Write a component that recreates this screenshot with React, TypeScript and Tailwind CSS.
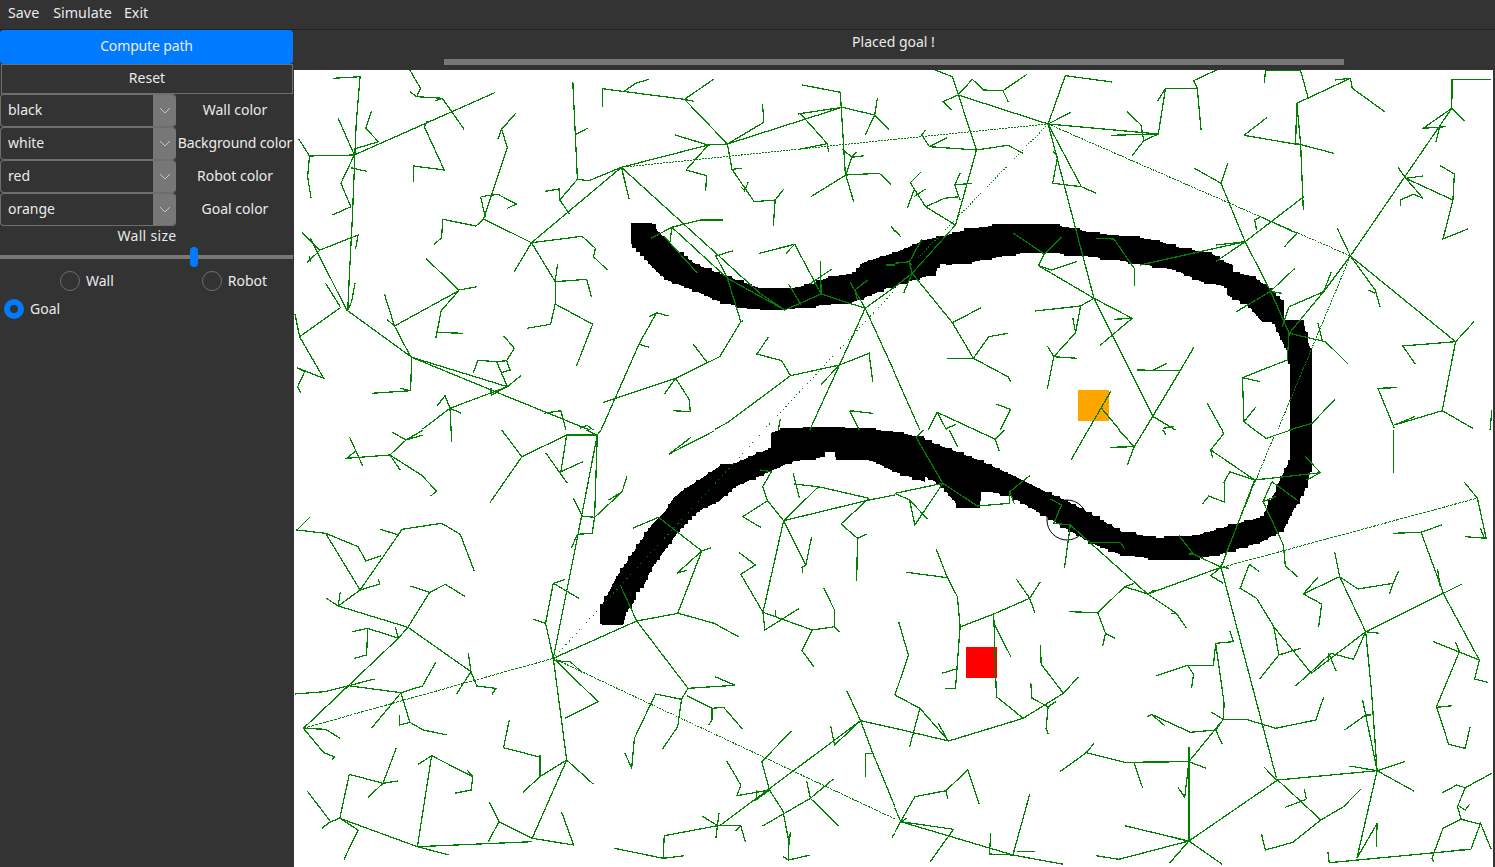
import React from "react";

type Q = { ox: number; oy: number; sx?: number };
const Q1: Q = { ox: 295, oy: 0 };
const Q2: Q = { ox: 895, oy: 0 };
const Q3: Q = { ox: 295, oy: 430 };
const Q4: Q = { ox: 895, oy: 430 };
const Z1: Q = { ox: 600, oy: 215, sx: 3 };
const Z2: Q = { ox: 595, oy: 420, sx: 3 };
const Z3: Q = { ox: 925, oy: 220, sx: 3 };
const Z4: Q = { ox: 925, oy: 320, sx: 3 };
const SX = 1568 / 600;

const conv = (q: Q, s: string): [number, number][] =>
  s.trim().split(/\s+/).map((p) => {
    const [a, b] = p.split(",").map(Number);
    return [q.ox + a / (q.sx ?? SX), q.oy + b / 3];
  });
const toPts = (q: Q, s: string) => conv(q, s).map(([x, y]) => `${x.toFixed(1)},${y.toFixed(1)}`).join(" ");

const L1 = `100,235 170,230 160,370 150,650 142,830 138,930
300,210 328,265 318,290 385,295 442,388
300,275 318,290
367,303 385,295
522,278 155,465 38,468 33,530 42,595
10,417 38,468
113,355 155,465
200,332 185,385 218,425 155,447
338,380 390,510 310,498 310,545
338,380 346,362
155,465 120,550 146,620 98,645
145,503 187,514
726,245 738,538 768,542 853,502
735,403 767,383
738,538 692,600 718,643
654,574 690,567 692,600
853,502 618,728
853,502 873,596
853,502 1080,435 1130,432
853,502 1215,880 1280,930
803,322 803,266 1018,298 1130,432
860,274 890,250 925,238
1018,298 1094,238
1018,298 1042,304
1130,432 1430,322 1515,345 1552,388
1130,432 1225,367 1222,313
993,405 1080,435 1022,510 1076,527 1073,572
1130,432 1142,508 1200,605 1255,600 1277,568
1255,600 1250,677
1142,508 1167,505
1165,560 1175,572 1185,545
1326,255 1425,277 1438,520 1460,605
1314,342 1430,322
1320,340 1390,430 1395,455
1522,295 1515,345 1490,405
1320,447 1388,432
1430,447 1455,472 1440,525 1348,590
1467,455 1455,472 1488,467
1440,525 1527,520 1558,553
578,338 540,388 530,418
540,388 555,443 493,657 618,728
493,657 473,678 386,658 383,713 364,733
485,590 530,583 578,612 555,625
485,590 497,650
618,728 750,709 785,745 780,770 817,811
618,728 572,817
618,728 680,845 762,838 775,892
686,793 680,845 680,912 668,973 606,985
680,912 778,973 736,1097
18,697 65,750 32,788
40,715 135,930
38,768 40,785
65,750 165,705 158,748
80,850 118,920
157,848 148,905 138,930
120,922 12,1010 75,1135 5,1103 25,1115 7,1160 15,1178
0,942 12,1010
135,930 305,1072
342,775 428,870 476,860
428,872 260,978 240,958
428,872 382,932 368,1015
368,997 438,1000
234,883 260,978 303,1072
305,1072 302,1172 200,1180
275,1165 302,1172
305,1072 555,1160 590,1127
305,1072 530,1178 770,1290
555,1160 405,1225 333,1288
555,1160 527,1085 478,1081 466,1118
527,1085 553,1082 573,1045 545,1007
553,1082 562,1110 538,1118
512,1165 513,1185 555,1160
392,1187 405,1225 435,1240
372,1217 392,1187
405,1225 408,1290
650,1240 695,1232 708,1290
745,1285 763,1276 780,1290
800,1290 900,1030 945,938 976,948
925,950 945,938
900,1033 925,1042
806,1207 995,1135 1110,1070 1165,965 1130,835
1165,965 1172,962
995,1135 965,1183
995,1135 1030,1198 1033,1235 988,1232
1041,1033 1077,1087
1097,1288 1130,1268 1295,1127 1423,1095 1500,1060 1510,1145
1295,1127 1272,1082 1207,1062 1237,1012
1423,1095 1375,1153
1423,1095 1345,1290
1490,925 1423,1095
1130,835 1280,930 1375,882 1490,925 1568,1120
1130,835 1100,768 1145,752
930,715 985,682 1060,660 1118,660
985,682 980,725
985,682 1130,835
965,710 1052,820
1213,760 1306,733 1375,882
1283,760 1306,733
1373,782 1375,882
1345,852 1402,808
1290,853 1322,913
1450,845 1490,925
1463,870 1497,840
1463,870 1470,900
1490,925 1568,860
1558,678 1568,695
1268,1258 1263,1290
1450,1232 1510,1240
1450,1232 1475,1290
1545,795 1568,795`;

const L2 = `105,210 150,230 213,450 158,675 45,820
165,285 202,238 232,270 282,272 345,223
282,272 297,307
148,330 125,305 165,285
165,285 400,372 688,402 707,265 790,265 800,390
790,265 780,242 840,210
686,304 707,265
400,372 445,227 568,246
400,372 460,337
400,372 487,560 412,550 425,470 412,452
487,560 526,580
400,372 520,895 675,1250
565,406 688,402 650,422 620,467
607,335 643,375 650,422
213,450 295,436 335,460
213,450 90,440 70,405 80,390
90,440 135,413
158,675 80,620 40,548 67,517
80,620 130,595 168,590
32,625 50,570
50,590 80,567
170,520 156,555 170,600
156,555 200,550
1050,310 1190,235 1195,265 1280,335
1150,240 1190,235
1050,310 1047,430 1147,460
1050,310 1060,430 1067,630
912,406 973,352
912,406 1060,435
965,250 968,212 1060,212 1080,295
1557,238 1456,238 1455,325 1380,385 1440,380
1455,325 1488,362
1455,325 1190,768
1425,375 1413,427
780,503 852,550 870,490
852,550 915,725 980,870 1030,1000
840,735 915,725 640,795
915,725 838,785
915,725 1068,590
955,650 1050,700 1018,740
945,690 940,660 955,650
1315,503 1335,535 1380,595 1355,583 1320,600 1322,617
1335,535 1380,528
1335,535 1458,600 1462,522 1425,497
1458,600 1432,717 1498,686
1156,685 1190,768 1255,870 1268,922
1238,870 1255,880
1190,768 1465,1025 1513,965
1465,1025 1327,1038 1360,1093
1465,1025 1430,1232 1305,1275 1358,1250
1430,1232 1510,1285
1312,1163 1262,1165 1305,1285
1190,768 1120,875 1030,920 1012,980
1120,875 1140,817
1120,875 1030,1000
1030,1000 1125,1025 1185,1093
1105,968 1117,1022
1030,1000 1025,1080 908,1133 912,1265 940,1290
908,1133 955,1145
912,1265 942,1222
1150,1198 1090,1270 1030,1290
892,935 980,875 1045,805
985,875 1012,880
0,690 15,710
0,790 38,785
70,718 38,785 45,820 23,878
45,820 0,860
45,820 150,968 205,1075 295,1130 302,1145
150,968 225,923
136,1075 205,1075 245,1010 295,1000
310,700 390,762 435,712
390,762 375,797 410,810 475,785
375,797 520,895 620,955 535,1037
572,958 620,955
520,895 485,918 367,933
485,918 472,998 415,1070 398,1166
465,955 472,998
398,1037 415,1070 477,1075
525,715 572,717 625,805 627,858
0,1122 65,1290
505,1290 565,1172
540,1225 587,1290
632,1110 745,1112 782,1040
745,1112 652,1290
675,1110 710,1090
675,1250 733,1290
700,1285 730,1280
265,1213 302,1228 275,1290
87,1290 110,1237 210,1290
110,1237 135,1290
135,1285 160,1273
815,1208 855,1290
1560,1230 1555,1290`;

const L3 = `143,22 177,108
252,5 290,30 335,15
290,30 248,75 135,85 160,62
335,0 290,30
248,75 275,120
248,75 330,135 370,183 355,198
408,0 410,37
540,0 593,80 710,15 790,15
593,80 510,217
655,68 712,160
710,15 695,125 752,95
790,15 783,262 750,258 727,203
783,262 855,185 868,137
820,210 855,185
783,262 777,310 738,313 722,355
790,15 740,310 675,685
760,0 790,15 800,0
978,72 1095,3
978,72 1035,22
675,685 893,573 1002,550 1095,580 1162,622
852,470 893,573 1027,775 1150,766 1098,740
1027,775 1010,808 942,792 887,925 880,1013 862,970
1010,808 1000,890 960,958
1023,797 1090,835 1120,832 1170,898
1090,835 1090,870 1080,886
882,295 950,262 1063,363 1000,550
1063,363 1087,353
1063,363 998,430 1025,420
1215,120 1245,125 1222,170 1235,212 1277,272
1235,212 1170,260 1217,292
1277,272 1368,170 1500,205
1302,130 1318,203
1305,162 1368,170
1277,272 1500,210 1568,195
1500,205 1427,282 1470,325 1495,312
1470,325 1468,452
1277,272 1335,405 1350,322
1335,405 1325,412 1327,430
1277,272 1223,547 1228,600 1318,535
1160,367 1203,405 1165,433 1223,547 1352,600 1325,662 1357,712
1352,600 1410,590 1423,605
1410,590 1410,540 1382,475
1255,540 1257,560
40,260 5,300 80,310 165,350 185,393 225,377
80,310 170,480 222,462 218,447
170,480 280,298 383,280 432,313 468,422
222,298 272,315
170,480 113,528 82,505
118,487 113,528
113,528 295,592 460,725
302,468 352,487 393,463 445,500
352,487 295,592 270,625 22,895
150,605 190,595 270,625
190,595 187,675 155,685
262,592 270,622
453,670 460,725 422,792
460,725 475,768 525,775 515,793
368,697 333,768 277,788 140,767 22,895
208,747 140,767 78,785 0,792
277,788 200,895
277,788 300,877 273,885 273,855
300,877 335,900 398,915
22,895 80,898 118,925
22,895 75,968 103,980 97,988
675,685 655,580 675,460 742,505
623,568 655,580
675,460 706,448
675,685 710,990 780,1063
675,685 792,815 705,865
675,692 720,695 750,728
710,990 640,1040 595,1088
640,1040 640,975
642,982 545,953 560,870
710,990 620,1225 728,1245 697,1147
620,1225 533,1175 508,1117
533,1175 505,1235
620,1235 320,1250 403,1275
320,1250 357,977 322,1003
357,977 465,1040 450,1020
465,1040 460,1080 417,1090
320,1250 117,1165 142,1033 230,1060 268,1053
230,1060 265,953
230,1060 190,1103
32,1083 93,1175 70,1195
117,1165 93,1175
117,1165 165,1200 128,1288
1442,782 1478,872 1110,1187
1478,872 1568,895
1478,872 1510,970 1568,1130
1510,970 1490,970 1490,1040
1400,887 1410,945 1478,872
1298,902 1220,995 1240,1080 1275,1143 1290,1230 1290,1290 1275,1280
1128,992 1165,1065 1155,1097 1240,1080
1207,1080 1205,1110 1240,1080
1222,1188 1347,1105 1420,1188
1337,1053 1347,1105 1407,1047
1062,1157 1105,1187 965,1217 962,1285 835,1255
962,1285 1018,1277
1105,1187 1165,1187 1177,1237
1165,1187 1152,1203
1108,1150 1100,1225
1290,1290 1347,1275
1295,1205 1290,1250
1568,1210 1560,1222`;

const L4 = `55,22 125,160 215,228 300,220 300,185 352,137
75,0 55,22
125,160 52,285 38,210 0,190
125,160 0,190
38,210 85,267
300,185 312,222
407,207 435,225 415,280 458,285 443,415
458,285 660,492
510,338 590,338 600,357
142,0 163,50
210,0 262,28 272,62
262,28 287,0
505,0 460,90
585,0 625,50 607,105
562,52 625,50 652,0
700,0 708,15
855,0 858,12 825,60 830,85
825,60 940,150 1112,128 1072,80
1112,128 1075,150
940,150 875,125 860,157 862,217 820,198 803,223
940,150 852,412
940,0 970,25 1035,0
985,155 1053,212
985,155 962,215 1015,345 1020,408 1052,440
962,215 995,200
742,317 780,372 852,412
768,372 780,372
852,412 660,492 600,470 530,548 550,610 543,647
550,610 575,625
456,545 530,548
600,470 625,460
660,492 735,550 762,595
722,550 735,550
660,492 678,480
852,412 825,437 858,460
852,412 873,415
852,412 997,1045
952,425 926,403 902,475 945,505 990,590 1003,675 952,748
990,590 1088,730
1003,675 1060,655
1149,365 1162,440 1230,605 1482,462
1162,440 1067,492 1105,442
1067,492 1115,522 1107,592
1162,440 1210,477 1302,460 1316,423
1302,460 1292,493
1302,0 1302,130
1488,157 1522,205 1545,325 1490,320
1530,295 1540,325
1302,310 1375,307 1430,284
1375,307 1435,495 1527,690 1515,747 1550,757
1418,418 1425,470
1407,635 1527,690
1465,637 1475,665 1415,830 1447,943 1490,955 1503,890
1415,832 1457,827
1230,605 1265,610
1230,605 1198,688 1140,670 1047,768
1230,605 1088,730
1133,670 1133,695
1133,670 1153,723
1230,605 1245,780 1260,1022 1207,1285
1222,810 1258,1010
1230,855 1175,900
1230,855 1243,855
1260,1022 1000,1050 768,1233 600,1187
1260,1022 1188,1008
1260,1022 1332,995
1260,1022 1357,1084
997,1050 965,1012
1000,1050 1113,1170 1172,1130 1217,1078
1113,1170 1040,1237 968,1260 958,1213
1075,1108 1020,1132
1070,1078 1075,1108
1131,1265 1135,1298 1505,1258 1530,1180 1558,1258
1207,1285 1260,1180 1258,1250
1560,1030 1490,1073 1470,1130 1480,1168 1530,1183
1490,1073 1468,1065 1428,1090
1470,1125 1490,1140 1502,1122
1480,1168 1432,1195 1403,1285 1408,1295
1455,1262 1505,1258
875,603 884,635 838,640 832,706 765,706 683,737
838,640 860,820 858,868 768,995 768,1233
765,706 780,733 775,773
827,847 858,868 917,868 995,895 1100,870 1120,802
858,868 838,900 772,907 670,853 705,887
660,860 670,853
838,900 855,943
431,1025 500,968 520,940
500,968 600,997 768,995 813,1015
625,1000 647,1073
768,950 768,995 757,1102 740,1073
768,1233 855,1303
768,1233 585,1288 525,1277
733,1225 768,1233 717,1300
108,358 137,443 163,500 170,590 158,775 130,775
30,427 137,443
172,590 258,552 352,505 380,455
352,505 317,447
352,505 365,548
258,552 265,800 335,865 140,933 0,895
258,552 258,580 303,680
122,730 160,717
380,645 382,703 440,790 335,865
440,790 480,740
355,760 358,805 400,830 395,895 400,912
400,830 420,815
10,577 35,675 0,795 65,835 140,933
65,835 38,952
113,880 135,925
0,1135 15,1175 52,1100 133,1082 190,1020 220,1122
133,1082 138,1108
15,1175 153,1198 92,1295
15,1175 308,1275 440,1303
0,1205 15,1175 32,1165
250,1210 247,1272 308,1275 352,1093
320,1265 365,1265`;

const DOTS: [Q, string, string][] = [
  [Q1, "853,502 1568,418", "2 1"],
  [Q2, "0,418 400,372", "2 1"],
  [Q2, "400,372 1190,768", "2 1"],
  [Q2, "400,372 38,800", "1 2"],
  [Q2, "1190,768 1000,1290", "2 1"],
  [Q1, "1232,1282 1568,870", "1 3"],
  [Q3, "1215,15 675,685", "1 4"],
  [Q3, "22,895 675,685", "3 1"],
  [Q3, "675,685 1568,1167", "2 1"],
  [Q4, "990,20 850,410", "2 1"],
  [Q4, "855,412 1520,205", "3 1"],
];

const wall: [number, number][] = [
  ...conv(Z1, "93,23 155,23 175,50 215,90 255,125 290,150 345,170 410,195 480,220 560,222 630,210 690,185 765,175 785,145 830,130 880,115 930,95"),
  ...conv(Z3, "0,60 80,42 140,25 230,15 380,15 450,25 500,40 600,48 690,60 770,85 860,100 895,125 925,135 925,160 970,165 1000,180 1030,205 1075,245 1075,300 1135,300"),
  ...conv(Z4, "1145,50 1160,100 1160,340 1155,460 1140,510 1100,580 1075,630 1010,665 880,705 820,715 680,715 590,705 500,670 380,600 330,570 250,525 170,512 165,558 100,558 60,510 40,490 0,470"),
  ...conv(Z2, "990,185 900,155 830,122 722,115 718,93 690,93 690,110 590,125 490,170 420,200 370,245 325,265 290,290 250,335 210,390 170,445 150,490 125,515 115,550 95,575 85,615 20,615 20,555 45,510 65,470 100,420 130,375 170,315 210,275 235,235 265,210 320,175 380,135 420,130 490,100 528,85 528,40 565,25 640,22 720,20 780,25 900,35 990,55"),
  ...conv(Z4, "0,360 80,390 160,420 260,465 350,510 420,540 520,595 590,635 700,655 820,645 940,610 1015,590 1030,550 1055,510 1060,490 1085,440 1095,420 1095,130 1085,90 1065,50"),
  ...conv(Z3, "1045,305 1010,305 970,255 905,225 905,200 830,185 750,150 640,130 540,115 400,100 290,100 200,115 120,130 65,135 45,125 30,165 0,170"),
  ...conv(Z1, "860,220 790,250 745,265 670,270 550,285 450,283 360,260 280,225 200,195 160,160 130,120 93,85"),
];

function stairs(pts: [number, number][], g: number) {
  const snap = (v: number) => Math.round(v / g) * g;
  let d = "";
  let last: [number, number] | null = null;
  for (let i = 0; i < pts.length; i++) {
    const [ax, ay] = pts[i];
    const [bx, by] = pts[(i + 1) % pts.length];
    const n = Math.max(1, Math.ceil(Math.hypot(bx - ax, by - ay)));
    for (let k = 0; k < n; k++) {
      const x = snap(ax + ((bx - ax) * k) / n);
      const y = snap(ay + ((by - ay) * k) / n);
      if (!last) {
        d += `M${x} ${y}`;
        last = [x, y];
      } else if (x !== last[0] || y !== last[1]) {
        if (x !== last[0]) d += `H${x}`;
        if (y !== last[1]) d += `V${y}`;
        last = [x, y];
      }
    }
  }
  return d + "Z";
}

const wallPath = stairs(wall, 4);
const wallOutline = wall.map(([x, y]) => `${x.toFixed(1)},${y.toFixed(1)}`).join(" ");

function Lines({ q, data }: { q: Q; data: string }) {
  return (
    <>
      {data.split("\n").map((l, i) => (
        <polyline key={i} points={toPts(q, l)} fill="none" stroke="#008000" strokeWidth={1.25} shapeRendering="crispEdges" />
      ))}
    </>
  );
}

function Chevron() {
  return (
    <svg width="12" height="7" viewBox="0 0 12 7" fill="none" stroke="#c4c4c4" strokeWidth="1">
      <path d="M1 1 L6 6 L11 1" />
    </svg>
  );
}

function ColorRow({ value, label, labelClass = "" }: { value: string; label: string; labelClass?: string }) {
  return (
    <div className="flex h-[33px] items-center">
      <div className="flex h-[33px] w-[176px] shrink-0 overflow-hidden rounded-[4px] border border-r-0 border-[#6e6e6e]">
        <div className="flex w-[152px] items-center pb-[2px] pl-[7px]">{value}</div>
        <div className="flex w-[23px] items-center justify-center bg-[#777777]">
          <Chevron />
        </div>
      </div>
      <div className={`flex-1 whitespace-nowrap pb-[2px] text-center ${labelClass}`}>{label}</div>
    </div>
  );
}

function Radio({ label, checked, className }: { label: string; checked?: boolean; className: string }) {
  return (
    <div className={`flex items-center gap-[6px] ${className}`}>
      {checked ? (
        <div className="flex h-[20px] w-[20px] items-center justify-center rounded-full bg-[#007bff]">
          <div className="h-[8px] w-[8px] rounded-full bg-[#333333]" />
        </div>
      ) : (
        <div className="h-[20px] w-[20px] rounded-full border-[1.5px] border-[#6e6e6e]" />
      )}
      <span className="pb-[2px]">{label}</span>
    </div>
  );
}

export default function App() {
  return (
    <div className="flex h-[867px] w-[1495px] flex-col overflow-hidden bg-[#333333] text-[14px] text-[#eaeaea] [font-family:'Noto_Sans',sans-serif]">
      <div className="flex h-[30px] shrink-0 items-center gap-[14px] border-b border-[#232323] pb-[4px] pl-[8px] text-[14.3px]">
        <span>Save</span>
        <span>Simulate</span>
        <span className="-ml-[2px]">Exit</span>
      </div>
      <div className="flex min-h-0 flex-1">
        <div className="flex w-[294px] shrink-0 flex-col">
          <div className="flex h-[34px] w-[293px] items-center justify-center rounded-[4px] bg-[#007bff] pb-[3px] tracking-[-0.15px]">Compute path</div>
          <div className="mx-[1px] flex h-[30px] w-[292px] items-center justify-center border border-[#6e6e6e] pb-[3px]">Reset</div>
          <ColorRow value="black" label="Wall color" />
          <ColorRow value="white" label="Background color" labelClass="tracking-[-0.12px]" />
          <ColorRow value="red" label="Robot color" />
          <ColorRow value="orange" label="Goal color" />
          <div className="flex h-[20px] items-center justify-center pb-[2px] tracking-[0.3px]">Wall size</div>
          <div className="relative h-[20px] w-[293px]">
            <div className="mt-[9px] h-[4px] bg-[#777777]" />
            <div className="absolute left-[190px] top-[1px] h-[20px] w-[8px] rounded-[4px] bg-[#007bff]" />
          </div>
          <div className="mt-[1px] flex h-[28px] items-center">
            <Radio label="Wall" className="ml-[60px]" />
            <Radio label="Robot" className="ml-[88px]" />
          </div>
          <div className="flex h-[28px] items-center">
            <Radio label="Goal" checked className="ml-[4px]" />
          </div>
        </div>
        <div className="flex min-w-0 flex-1 flex-col pr-[2px]">
          <div className="flex h-[40px] shrink-0 flex-col items-center">
            <div className="mt-[2px] h-[20px] leading-[20px]">Placed goal !</div>
            <div className="mt-[7px] h-[6px] w-[900px] bg-[#777777]" />
          </div>
          <div className="min-h-0 flex-1 bg-white">
            <svg width={1199} height={797} viewBox="294 70 1199 797" className="block">
              <polygon points={wallOutline} fill="#000000" shapeRendering="crispEdges" />
              <path d={wallPath} fill="#000000" shapeRendering="crispEdges" />
              <rect x={966} y={647} width={31} height={31} fill="#ff0000" shapeRendering="crispEdges" />
              <rect x={1078} y={390} width={31} height={31} fill="#ffa500" shapeRendering="crispEdges" />
              <circle cx={1067} cy={520} r={20} fill="none" stroke="#000000" strokeWidth={1} />
              <Lines q={Q1} data={L1} />
              <Lines q={Q2} data={L2} />
              <Lines q={Q3} data={L3} />
              <Lines q={Q4} data={L4} />
              {DOTS.map(([q, s, dash], i) => (
                <polyline key={i} points={toPts(q, s)} fill="none" stroke="#008000" strokeWidth={1} strokeDasharray={dash} shapeRendering="crispEdges" />
              ))}
            </svg>
          </div>
        </div>
      </div>
    </div>
  );
}
